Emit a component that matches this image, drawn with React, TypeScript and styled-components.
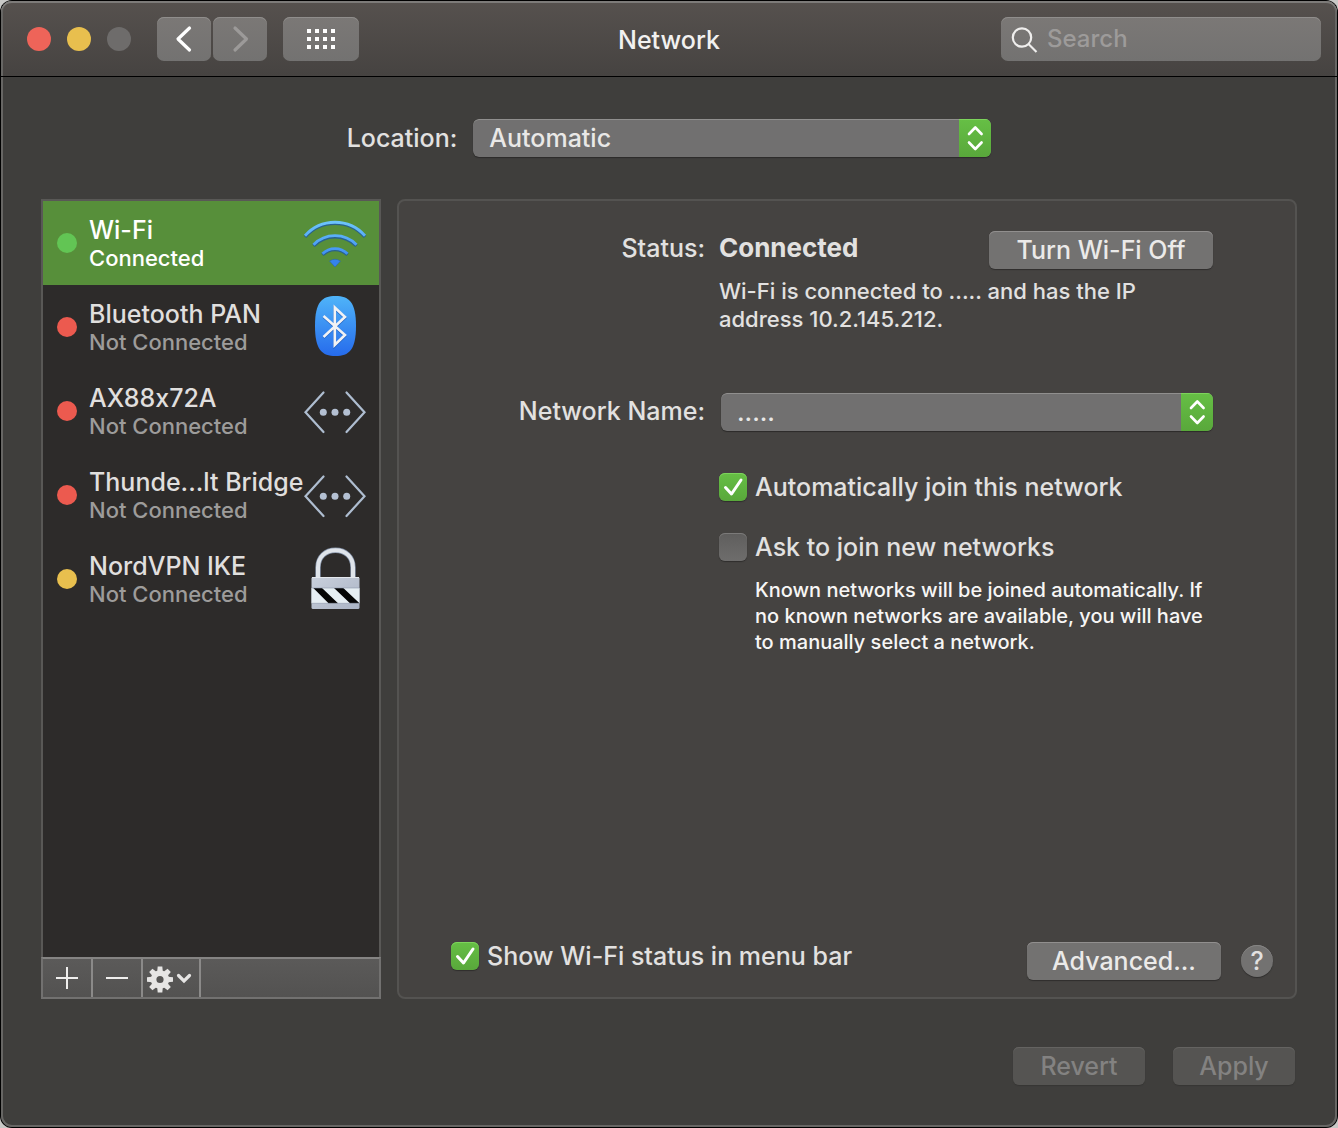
import React, { useId, useState } from "react";
import styled, { createGlobalStyle } from "styled-components";

const GlobalStyle = createGlobalStyle`
  *, *::before, *::after { box-sizing: border-box; }
  body {
    margin: 0;
    background: #c9c9c7;
    font-family: Inter, "Liberation Sans", sans-serif;
    font-size: 25px;
    font-weight: 450;
    line-height: 28px;
    color: #e2e1e0;
  }
  button, input, select { font: inherit; color: inherit; margin: 0; }
  ul { list-style: none; margin: 0; padding: 0; }
  p, h1 { margin: 0; }
  svg { display: block; flex: none; }
`;

const Frame = styled.div`
  display: flex;
  min-height: 100vh;
  padding: 1px;
  background: #000;
  border-radius: 12px;
`;

const Window = styled.div`
  flex: 1;
  display: flex;
  flex-direction: column;
  min-width: 0;
  border-radius: 11px;
  background: #3f3e3c;
  box-shadow: inset 0 0 0 2px #676664;
`;

const TitleBar = styled.header`
  display: grid;
  grid-template-columns: 1fr auto 1fr;
  align-items: center;
  height: 76px;
  padding: 0 16px;
  border-bottom: 1px solid #000;
  border-radius: 11px 11px 0 0;
  background: linear-gradient(#56514e, #464341);
  box-shadow: inset 0 2px 0 #7d7b79, inset 2px 0 0 #676664, inset -2px 0 0 #676664;
`;

const Title = styled.h1`
  font-size: 25px;
  font-weight: 500;
  line-height: 28px;
  padding-top: 2px;
  color: #f2f1f0;
`;

const Group = styled.div<{ $gap: number }>`
  display: flex;
  align-items: center;
  gap: ${(p) => p.$gap}px;
`;

const BarControls = styled.div`
  display: flex;
  align-items: center;
  padding-left: 10px;
`;

const NavButtons = styled.nav`
  display: flex;
  gap: 2px;
  margin: 0 16px 0 26px;
`;

const Light = styled.button<{ $color: string }>`
  width: 24px;
  height: 24px;
  padding: 0;
  border: 0;
  border-radius: 50%;
  background: ${(p) => p.$color};
`;

const BarButton = styled.button<{ $wide?: boolean }>`
  display: grid;
  place-items: center;
  width: ${(p) => (p.$wide ? 76 : 54)}px;
  height: 44px;
  padding: 0;
  border: 0;
  border-radius: 7px;
  background: linear-gradient(#7b7876, #737271);
  box-shadow: inset 0 1px 0 #908e8c;
  color: #fff;
  &:disabled { color: #9c9a99; }
`;

const SearchField = styled.label`
  justify-self: end;
  display: flex;
  align-items: center;
  gap: 9px;
  width: 320px;
  height: 44px;
  padding: 0 10px;
  border-radius: 7px;
  background: linear-gradient(#7b7876, #737271);
  box-shadow: inset 0 1px 0 #908e8c;
`;

const SearchInput = styled.input`
  flex: 1;
  min-width: 0;
  height: 40px;
  padding: 0;
  border: 0;
  outline: 0;
  background: none;
  font-size: 24px;
  &::placeholder { color: #9d9b9a; opacity: 1; }
`;

const Content = styled.main`
  flex: 1;
  display: flex;
  flex-direction: column;
  padding: 42px 40px;
`;

const LocationRow = styled.div`
  display: flex;
  justify-content: center;
  align-items: center;
  gap: 16px;
  margin-bottom: 42px;
`;

const SelectBox = styled.div<{ $width?: number }>`
  position: relative;
  width: ${(p) => (p.$width ? `${p.$width}px` : "100%")};
  height: 38px;
  border-radius: 6px;
  overflow: hidden;
  box-shadow: 0 1px 1px #2c2b2a;
`;

const NativeSelect = styled.select`
  appearance: none;
  width: 100%;
  height: 38px;
  padding: 0 48px 0 16px;
  border: 0;
  border-radius: 6px;
  outline: 0;
  background: #717070;
  box-shadow: inset 0 1px 0 #908f8e;
  color: #e9e8e7;
`;

const Stepper = styled.span`
  position: absolute;
  top: 0;
  right: 0;
  width: 32px;
  height: 38px;
  background: linear-gradient(#66bf45, #59a83b);
  box-shadow: inset 0 1px 0 #7dd45c;
  pointer-events: none;
`;

const Split = styled.div`
  flex: 1;
  display: flex;
  gap: 16px;
`;

const Sidebar = styled.nav`
  display: flex;
  flex-direction: column;
  width: 340px;
`;

const ServiceList = styled.ul`
  flex: 1;
  border: 2px solid #595856;
  border-bottom: 0;
  background: #2d2b2a;
`;

const Service = styled.button<{ $selected: boolean }>`
  display: flex;
  align-items: center;
  width: 100%;
  height: 84px;
  padding: 0 12px 0 14px;
  border: 0;
  text-align: left;
  background: ${(p) => (p.$selected ? "#578f3a" : "transparent")};
  color: ${(p) => (p.$selected ? "#fff" : "#e0dfde")};
`;

const Dot = styled.span<{ $color: string }>`
  flex: none;
  width: 20px;
  height: 20px;
  margin-right: 12px;
  border-radius: 50%;
  background: ${(p) => p.$color};
`;

const ServiceText = styled.span`
  flex: 1;
  min-width: 0;
  display: flex;
  flex-direction: column;
  padding-top: 3px;
  white-space: nowrap;
`;

/* Model names such as AX88x72A keep a plain letter x between digits. */
const ServiceName = styled.span<{ $model?: boolean }>`
  line-height: 28px;
  font-variant-ligatures: ${(p) => (p.$model ? "no-contextual" : "normal")};
`;

const ServiceState = styled.span<{ $selected: boolean }>`
  font-size: 22px;
  line-height: 29px;
  color: ${(p) => (p.$selected ? "#fff" : "#9d9c9b")};
`;

const ListTools = styled.div`
  display: flex;
  height: 42px;
  border: 2px solid #727170;
  border-top-color: #858483;
  background: linear-gradient(#5b5a59, #535251);
`;

const ToolButton = styled.button<{ $wide?: boolean }>`
  display: grid;
  place-items: center;
  width: ${(p) => (p.$wide ? 58 : 50)}px;
  padding: 0;
  border: 0;
  border-right: 2px solid #8b8a89;
  background: none;
`;

const Panel = styled.section`
  flex: 1;
  min-width: 0;
  display: flex;
  flex-direction: column;
  border: 2px solid #545351;
  border-radius: 8px;
  background: #454341;
`;

const Form = styled.div`
  flex: 1;
  padding: 30px 82px 0 0;
`;

const FormRow = styled.div<{ $gap?: number }>`
  display: grid;
  grid-template-columns: 306px 1fr;
  column-gap: ${(p) => p.$gap ?? 14}px;
`;

const FieldLabel = styled.label`
  text-align: right;
  line-height: 36px;
`;

const StatusHead = styled.div`
  display: flex;
  justify-content: space-between;
  line-height: 34px;
`;

const StatusLabel = styled.span`
  text-align: right;
  line-height: 34px;
`;

const StatusValue = styled.strong`
  font-size: 26px;
  font-weight: 700;
`;

const StatusText = styled.p`
  max-width: 450px;
  margin: 8px 0 60px;
  font-size: 22px;
  line-height: 28px;
`;

const PushButton = styled.button<{ $width: number }>`
  width: ${(p) => p.$width}px;
  height: 38px;
  padding: 0;
  border: 0;
  border-radius: 6px;
  line-height: 36px;
  background: #737271;
  box-shadow: inset 0 1px 0 #918f8e, 0 1px 1px #2f2e2d;
  color: #ebeae9;
  &:disabled {
    background: #555452;
    box-shadow: inset 0 1px 0 #646361, 0 1px 1px #373634;
    color: #838281;
  }
`;

const Options = styled.div`
  display: flex;
  flex-direction: column;
  align-items: flex-start;
  gap: 32px;
  padding-top: 42px;
`;

const CheckRow = styled.label`
  display: flex;
  align-items: center;
  gap: 8px;
  height: 28px;
`;

const CheckCell = styled.span`
  display: grid;
  & > * { grid-area: 1 / 1; }
  & > svg { pointer-events: none; }
`;

const CheckInput = styled.input`
  appearance: none;
  width: 28px;
  height: 28px;
  border-radius: 6px;
  background: linear-gradient(#5f5e5d, #6e6d6c);
  box-shadow: inset 0 1px 0 #7b7a79, 0 1px 1px #2f2e2d;
  &:checked {
    background: linear-gradient(#66bf45, #59a83b);
    box-shadow: inset 0 1px 0 #7dd45c, 0 1px 1px #2f2e2d;
  }
`;

const Note = styled.p`
  margin: 16px 0 0;
  padding-left: 36px;
  font-size: 20px;
  line-height: 26px;
  color: #f7f6f5;
`;

const PanelFooter = styled.div`
  display: flex;
  justify-content: space-between;
  align-items: flex-start;
  padding: 0 22px 17px 52px;
`;

const HelpButton = styled.button`
  width: 32px;
  height: 32px;
  padding: 0;
  border: 0;
  border-radius: 50%;
  background: #737271;
  box-shadow: inset 0 1px 0 #868584, 0 1px 1px #2f2e2d;
`;

const WindowActions = styled.footer`
  display: flex;
  justify-content: flex-end;
  gap: 28px;
  padding: 48px 2px 0 0;
`;

function Chevron({ back }: { back?: boolean }) {
  return (
    <svg width="26" height="28" viewBox="0 0 26 28" fill="none" stroke="currentColor" strokeWidth="3.2" strokeLinecap="round" strokeLinejoin="round">
      <path d={back ? "M18.5 3 7 14l11.5 11" : "M8 3l11.5 11L8 25"} />
    </svg>
  );
}

function GridIcon() {
  return (
    <svg width="28" height="20" viewBox="0 0 28 20" fill="currentColor">
      {[0, 8, 16].map((y) => [0, 8, 16, 24].map((x) => <rect key={`${x}-${y}`} x={x} y={y} width="4" height="4" />))}
    </svg>
  );
}

function SearchIcon() {
  return (
    <svg width="27" height="28" viewBox="0 0 27 28" fill="none" stroke="#efeeed" strokeWidth="2.2">
      <circle cx="11" cy="12.5" r="9.2" />
      <path d="M17.5 19l8 8" />
    </svg>
  );
}

function WifiIcon() {
  const arcs = (
    <>
      <path d="M2 25A40 40 0 0 1 62 25" />
      <path d="M10.5 34A30 30 0 0 1 53.5 34" />
      <path d="M19.5 43A17.500 17.500 0 0 1 44.5 43" />
    </>
  );
  return (
    <svg width="64" height="64" viewBox="0 0 64 64" fill="none">
      <defs>
        <linearGradient id="wifiBlue" gradientUnits="userSpaceOnUse" x1="0" y1="12" x2="0" y2="56">
          <stop offset="0" stopColor="#6cc3fb" />
          <stop offset="1" stopColor="#2f7df0" />
        </linearGradient>
      </defs>
      <g stroke="#28618c" strokeWidth="3.4" transform="translate(0 .8)">{arcs}</g>
      <g stroke="url(#wifiBlue)" strokeWidth="2.8" transform="translate(0 -.2)">{arcs}</g>
      <path d="M26.5 50Q32 46.5 37.5 50L32 56z" fill="#3583ec" stroke="#2a66a8" strokeWidth=".6" />
    </svg>
  );
}

function BluetoothIcon() {
  return (
    <svg width="64" height="64" viewBox="0 0 64 64" fill="none">
      <defs>
        <linearGradient id="btBlue" x1="0" y1="0" x2="0" y2="1">
          <stop offset="0" stopColor="#4fb4f9" />
          <stop offset="1" stopColor="#266bec" />
        </linearGradient>
      </defs>
      <path d="M32.500 1C46 1 53 7 53 31s-7 30-20.500 30S12 55 12 31 19 1 32.500 1z" fill="url(#btBlue)" />
      <path d="M20.5 21 42 40 31.800 50V12.500L42 22 20.5 42" stroke="#1f5fc0" strokeWidth="2.800" transform="translate(0 .8)" />
      <path d="M20.5 21 42 40 31.800 50V12.500L42 22 20.5 42" stroke="#f1f2f4" strokeWidth="2.600" />
    </svg>
  );
}

function EthernetIcon() {
  return (
    <svg width="64" height="64" viewBox="0 0 64 64" fill="none">
      <path d="M20.5 13.5 2.5 33.3l18 19.7M43.5 13.5l18 19.8-18 19.7" stroke="#aebdd0" strokeWidth="2.2" strokeLinecap="round" />
      <g fill="#b4c0d2">
        <circle cx="20.3" cy="33.3" r="3.5" />
        <circle cx="32" cy="33.3" r="3.5" />
        <circle cx="43.7" cy="33.3" r="3.5" />
      </g>
    </svg>
  );
}

function LockIcon() {
  return (
    <svg width="64" height="64" viewBox="0 0 64 64" fill="none">
      <defs>
        <linearGradient id="lockTop" x1="0" y1="0" x2="1" y2="1">
          <stop offset="0" stopColor="#c9d0dc" />
          <stop offset="1" stopColor="#aab3c4" />
        </linearGradient>
      </defs>
      <path d="M15 31V20.5C15 10 22.5 3.2 32.5 3.2S50 10 50 20.5V31" stroke="#8492a8" strokeWidth="5.4" />
      <path d="M15 31V20.5C15 10 22.5 3.2 32.5 3.2S50 10 50 20.5V31" stroke="#dfe4ea" strokeWidth="4" />
      <rect x="8.5" y="30" width="48" height="32" rx="1.5" fill="url(#lockTop)" />
      <path d="M8.5 41h48v15.3h-48z" fill="#e6eef3" />
      <path d="M10.3 41h8.7l16 15.3h-9.5zM31 41h9.3l16.2 15.3H47z" fill="#050505" />
      <path d="M9 30.5h47" stroke="#e4e8ee" />
      <path d="M9 41h47.5M9 56.3h47.5" stroke="#8e99ad" strokeWidth=".6" />
    </svg>
  );
}

function GearMenuIcon() {
  return (
    <svg width="50" height="30" viewBox="0 0 50 30" fill="none">
      <g transform="translate(14 16.5)">
        <circle r="6.4" stroke="#e6e5e4" strokeWidth="5.6" />
        <g fill="#e6e5e4">
          {[0, 45, 90, 135, 180, 225, 270, 315].map((a) => (
            <path key={a} d="M-2.8-8l.5-5h4.6l.5 5z" transform={`rotate(${a})`} />
          ))}
        </g>
      </g>
      <path d="M32.5 12.5l5.5 5.500 5.5-5.500" stroke="#e6e5e4" strokeWidth="3.2" strokeLinecap="round" />
    </svg>
  );
}

function Popup({ label, id, width }: { label: string; id: string; width?: number }) {
  return (
    <SelectBox $width={width}>
      <NativeSelect id={id} defaultValue={label}>
        <option>{label}</option>
      </NativeSelect>
      <Stepper>
        <svg width="32" height="38" viewBox="0 0 32 38" fill="none" stroke="#fff" strokeWidth="2.6" strokeLinecap="round" strokeLinejoin="round">
          <path d="M10 15l6.3-6.5 6.3 6.5M10 23.5l6.3 6.500 6.3-6.5" />
        </svg>
      </Stepper>
    </SelectBox>
  );
}

function CheckBox({ label, initial }: { label: string; initial: boolean }) {
  const id = useId();
  const [on, setOn] = useState(initial);
  return (
    <CheckRow htmlFor={id}>
      <CheckCell>
        <CheckInput id={id} type="checkbox" checked={on} onChange={() => setOn(!on)} />
        {on && (
          <svg width="28" height="28" viewBox="0 0 28 28" fill="none" stroke="#fff" strokeWidth="3" strokeLinecap="round" strokeLinejoin="round">
            <path d="M6.5 14.5l6 6.500L22 7" />
          </svg>
        )}
      </CheckCell>
      {label}
    </CheckRow>
  );
}

const services = [
  { name: "Wi-Fi", state: "Connected", color: "#62c554", Icon: WifiIcon },
  { name: "Bluetooth PAN", state: "Not Connected", color: "#ec5a4f", Icon: BluetoothIcon },
  { name: "AX88x72A", state: "Not Connected", color: "#ec5a4f", Icon: EthernetIcon, model: true },
  { name: "Thunde...lt Bridge", state: "Not Connected", color: "#ec5a4f", Icon: EthernetIcon },
  { name: "NordVPN IKE", state: "Not Connected", color: "#e8bf4e", Icon: LockIcon },
];

export default function App() {
  const [selected, setSelected] = useState(0);
  return (
    <Frame>
      <GlobalStyle />
      <Window>
        <TitleBar>
          <BarControls>
            <Group $gap={16}>
              <Light $color="#ee6459" aria-label="Close" />
              <Light $color="#e8bf4e" aria-label="Minimize" />
              <Light $color="#6e6c6b" aria-label="Zoom" disabled />
            </Group>
            <NavButtons>
              <BarButton aria-label="Back"><Chevron back /></BarButton>
              <BarButton aria-label="Forward" disabled><Chevron /></BarButton>
            </NavButtons>
            <BarButton $wide aria-label="Show all"><GridIcon /></BarButton>
          </BarControls>
          <Title>Network</Title>
          <SearchField>
            <SearchIcon />
            <SearchInput type="text" placeholder="Search" aria-label="Search" />
          </SearchField>
        </TitleBar>
        <Content>
          <LocationRow>
            <FieldLabel htmlFor="location">Location:</FieldLabel>
            <Popup id="location" label="Automatic" width={518} />
          </LocationRow>
          <Split>
            <Sidebar>
              <ServiceList>
                {services.map(({ name, state, color, Icon, model }, i) => (
                  <li key={name}>
                    <Service $selected={i === selected} onClick={() => setSelected(i)}>
                      <Dot $color={color} />
                      <ServiceText>
                        <ServiceName $model={model}>{name}</ServiceName>
                        <ServiceState $selected={i === selected}>{state}</ServiceState>
                      </ServiceText>
                      <Icon />
                    </Service>
                  </li>
                ))}
              </ServiceList>
              <ListTools>
                <ToolButton aria-label="Add service">
                  <svg width="22" height="22" viewBox="0 0 22 22" stroke="#efeeed" strokeWidth="2"><path d="M0 11h22M11 0v22" /></svg>
                </ToolButton>
                <ToolButton aria-label="Remove service">
                  <svg width="22" height="22" viewBox="0 0 22 22" stroke="#efeeed" strokeWidth="2"><path d="M0 11h22" /></svg>
                </ToolButton>
                <ToolButton $wide aria-label="Service options"><GearMenuIcon /></ToolButton>
              </ListTools>
            </Sidebar>
            <Panel>
              <Form>
                <FormRow>
                  <StatusLabel>Status:</StatusLabel>
                  <div>
                    <StatusHead>
                      <StatusValue>Connected</StatusValue>
                      <PushButton $width={224}>Turn Wi-Fi Off</PushButton>
                    </StatusHead>
                    <StatusText>Wi-Fi is connected to ..... and has the IP address 10.2.145.212.</StatusText>
                  </div>
                </FormRow>
                <FormRow $gap={16}>
                  <FieldLabel htmlFor="network">Network Name:</FieldLabel>
                  <Popup id="network" label="....." />
                </FormRow>
                <FormRow>
                  <span />
                  <div>
                    <Options>
                      <CheckBox label="Automatically join this network" initial />
                      <CheckBox label="Ask to join new networks" initial={false} />
                    </Options>
                    <Note>Known networks will be joined automatically. If no known networks are available, you will have to manually select a network.</Note>
                  </div>
                </FormRow>
              </Form>
              <PanelFooter>
                <CheckBox label="Show Wi-Fi status in menu bar" initial />
                <Group $gap={20}>
                  <PushButton $width={194}>Advanced...</PushButton>
                  <HelpButton aria-label="Help">?</HelpButton>
                </Group>
              </PanelFooter>
            </Panel>
          </Split>
          <WindowActions>
            <PushButton $width={132} disabled>Revert</PushButton>
            <PushButton $width={122} disabled>Apply</PushButton>
          </WindowActions>
        </Content>
      </Window>
    </Frame>
  );
}
